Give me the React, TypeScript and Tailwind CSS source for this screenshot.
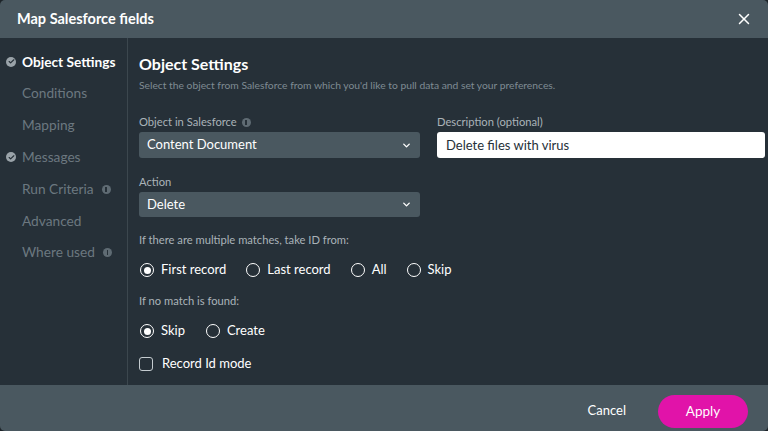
import React, { useState } from 'react';
import { X, ChevronDown, Check } from 'lucide-react';

const NAV = [
  { label: 'Object Settings', done: true, active: true },
  { label: 'Conditions' },
  { label: 'Mapping' },
  { label: 'Messages', done: true },
  { label: 'Run Criteria', info: true },
  { label: 'Advanced' },
  { label: 'Where used', info: true },
];

function InfoDot({ gap = 'ml-1.5' }: { gap?: string }) {
  return (
    <span className={`inline-flex items-center justify-center w-[9px] h-[9px] rounded-full bg-[#5f6b73] ${gap}`}>
      <span className="w-[1.5px] h-[5px] bg-[#263038]" />
    </span>
  );
}

function Radio({ checked, label, onClick }: { checked: boolean; label: string; onClick: () => void }) {
  return (
    <button onClick={onClick} className="flex items-center gap-[7px] text-white text-[13px] h-[20px]">
      <span className="w-[14px] h-[14px] rounded-full border-[1.5px] border-white flex items-center justify-center">
        {checked && <span className="w-[7px] h-[7px] rounded-full bg-white" />}
      </span>
      {label}
    </button>
  );
}

export default function App() {
  const [multi, setMulti] = useState('first');
  const [noMatch, setNoMatch] = useState('skip');
  const [recordId, setRecordId] = useState(false);

  return (
    <div className="w-[768px] h-[431px] bg-[#1d2429] font-['Lato','Noto_Sans',sans-serif]">
      <div className="w-full h-full rounded-[5px] overflow-hidden flex flex-col">
        {/* header */}
        <div className="h-[38px] bg-[#4a5860] flex items-center justify-between pl-[17px] pr-[15px] shrink-0">
          <h2 className="text-white font-bold text-[14.5px]">Map Salesforce fields</h2>
          <X className="w-[18px] h-[18px] text-white" strokeWidth={2} />
        </div>

        {/* body */}
        <div className="flex-1 flex bg-[#263038] min-h-0">
          <div className="w-[128px] border-r border-[#3c474e] pt-[8px] shrink-0">
            {NAV.map((item) => (
              <div key={item.label} className="h-[31.8px] flex items-center">
                <span className="w-[22px] flex justify-center">
                  {item.done && (
                    <span className="w-[10px] h-[10px] rounded-full bg-[#9aa3a9] flex items-center justify-center">
                      <Check className="w-[7px] h-[7px] text-[#263038]" strokeWidth={4} />
                    </span>
                  )}
                </span>
                <span className={`text-[13.7px] ${item.active ? 'text-white font-bold' : 'text-[#6c7880]'}`}>
                  {item.label}
                </span>
                {item.info && <InfoDot gap="ml-[8px]" />}
              </div>
            ))}
          </div>

          <div className="flex-1 pl-[11px] pt-[15px] pr-[3px]">
            <h1 className="text-white font-bold text-[16px] leading-[22px]">Object Settings</h1>
            <p className="text-[#7f8b93] text-[10.3px] leading-[14px] mt-[3px]">
              Select the object from Salesforce from which you'd like to pull data and set your preferences.
            </p>

            <div className="flex gap-[17px] mt-[22px]">
              <div className="w-[281px]">
                <div className="flex items-center text-[#aab3b9] text-[11.2px] leading-[16px] h-[16px]">
                  Object in Salesforce <InfoDot gap="ml-[5px]" />
                </div>
                <div className="mt-[2px] h-[26px] rounded-[3px] bg-[#4a5860] flex items-center justify-between pl-[8px] pr-[8px] text-white text-[13px]">
                  Content Document
                  <ChevronDown className="w-[11px] h-[11px]" strokeWidth={3} />
                </div>

                <div className="text-[#aab3b9] text-[11.2px] leading-[16px] h-[16px] mt-[16px]">Action</div>
                <div className="mt-[2px] h-[25px] rounded-[3px] bg-[#4a5860] flex items-center justify-between pl-[8px] pr-[8px] text-white text-[13px]">
                  Delete
                  <ChevronDown className="w-[11px] h-[11px]" strokeWidth={3} />
                </div>
              </div>

              <div className="w-[328px]">
                <div className="text-[#aab3b9] text-[11.2px] leading-[16px] h-[16px]">Description (optional)</div>
                <input
                  defaultValue="Delete files with virus"
                  className="mt-[2px] w-full h-[26px] rounded-[3px] bg-white px-[9px] text-[13px] text-[#263038] outline-none"
                />
              </div>
            </div>

            <div className="text-[#aab3b9] text-[11.2px] leading-[16px] mt-[15px]">If there are multiple matches, take ID from:</div>
            <div className="flex items-center gap-[20px] mt-[12px] pl-[1px]">
              <Radio checked={multi === 'first'} label="First record" onClick={() => setMulti('first')} />
              <Radio checked={multi === 'last'} label="Last record" onClick={() => setMulti('last')} />
              <Radio checked={multi === 'all'} label="All" onClick={() => setMulti('all')} />
              <Radio checked={multi === 'skip'} label="Skip" onClick={() => setMulti('skip')} />
            </div>

            <div className="text-[#aab3b9] text-[11.2px] leading-[16px] mt-[13px]">If no match is found:</div>
            <div className="flex items-center gap-[21px] mt-[12px] pl-[1px]">
              <Radio checked={noMatch === 'skip'} label="Skip" onClick={() => setNoMatch('skip')} />
              <Radio checked={noMatch === 'create'} label="Create" onClick={() => setNoMatch('create')} />
            </div>

            <button onClick={() => setRecordId(!recordId)} className="flex items-center gap-[9px] mt-[13px] h-[20px] text-white text-[13px]">
              <span className="w-[14px] h-[14px] rounded-[3px] border-[1.5px] border-[#c5ccd0] flex items-center justify-center">
                {recordId && <Check className="w-[10px] h-[10px]" strokeWidth={3} />}
              </span>
              Record Id mode
            </button>
          </div>
        </div>

        {/* footer */}
        <div className="h-[46px] bg-[#4a5860] flex items-center justify-end pr-[20px] pt-[6px] shrink-0">
          <button className="text-white text-[13px] mr-[32px]">Cancel</button>
          <button className="w-[90px] h-[33px] rounded-full bg-[#e113a9] text-white text-[13.5px]">Apply</button>
        </div>
      </div>
    </div>
  );
}
